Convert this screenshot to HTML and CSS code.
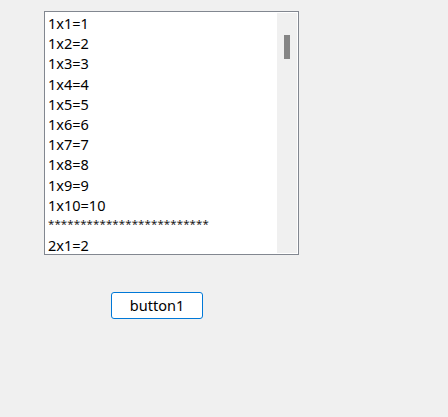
FILE: index.html
```html
<!DOCTYPE html>
<html>
<head>
<meta charset="utf-8">
<link rel="stylesheet" href="styles.css">
</head>
<body>
<div class="form">
  <div class="listbox">
    <div class="items">
      <div class="item">1x1=1</div>
      <div class="item">1x2=2</div>
      <div class="item">1x3=3</div>
      <div class="item">1x4=4</div>
      <div class="item">1x5=5</div>
      <div class="item">1x6=6</div>
      <div class="item">1x7=7</div>
      <div class="item">1x8=8</div>
      <div class="item">1x9=9</div>
      <div class="item">1x10=10</div>
      <div class="item sep">*************************</div>
      <div class="item">2x1=2</div>
    </div>
    <div class="scrollbar"><div class="thumb"></div></div>
  </div>
  <div class="btn-row">
    <button class="button">button1</button>
  </div>
</div>
</body>
</html>
```
FILE: styles.css
```css
html, body {
  margin: 0;
  padding: 0;
  background: #f0f0f0;
  width: 448px;
  height: 417px;
  overflow: hidden;
  font-family: "Noto Sans", "Open Sans", sans-serif;
}
.form {
  display: flex;
  flex-direction: column;
  padding: 11px 0 0 44px;
}
.listbox {
  width: 253px;
  height: 242px;
  border: 1px solid #828790;
  background: #ffffff;
  display: flex;
  overflow: hidden;
}
.items {
  flex: 1;
  padding: 1px 0 0 3px;
  overflow: hidden;
  font-size: 14.5px;
  color: #000;
}
.item {
  height: 20.2px;
  line-height: 20.2px;
  white-space: nowrap;
}
.sep {
  font-size: 11.5px;
  letter-spacing: 0.1px;
  line-height: 18px;
  color: #1a1a1a;
}
.scrollbar {
  width: 20px;
  margin: 1px 1px 1px 0;
  background: #f0f0f0;
  display: flex;
  justify-content: center;
  padding-top: 22px;
  box-sizing: border-box;
}
.thumb {
  width: 6px;
  height: 24px;
  background: #858585;
}
.btn-row {
  display: flex;
  padding: 37px 0 0 67px;
}
.button {
  width: 92px;
  height: 27px;
  box-sizing: border-box;
  border: 1px solid #0078d7;
  border-radius: 3px;
  background: #ffffff;
  font-family: "Noto Sans", "Open Sans", sans-serif;
  font-size: 14.5px;
  color: #000;
  padding: 0;
  line-height: 23px;
}
```
